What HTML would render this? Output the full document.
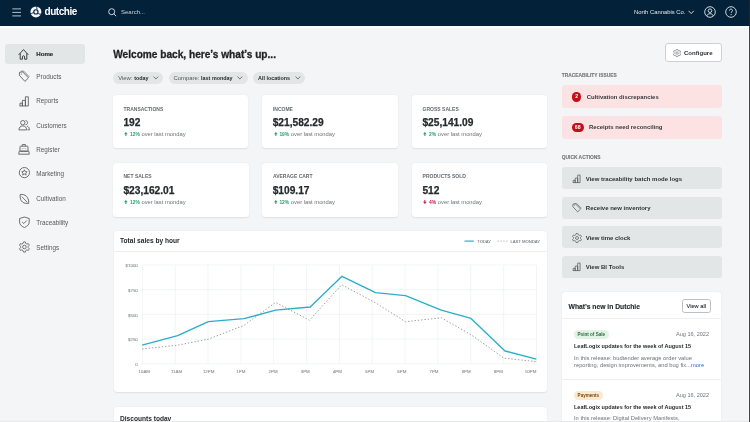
<!DOCTYPE html>
<html><head><meta charset="utf-8">
<style>
*{box-sizing:border-box;margin:0;padding:0;white-space:nowrap}
html,body{width:750px;height:422px;overflow:hidden;background:#f4f5f6;font-family:"Liberation Sans",sans-serif;color:#1d2124;position:relative}
.a{position:absolute;white-space:nowrap}
#top{position:absolute;left:0;top:0;width:750px;height:26px;background:#04213a}
.nav{position:absolute;left:36.3px;font-size:6.3px;color:#555a5e;line-height:8px}
.card{position:absolute;background:#fff;border-radius:3.5px;box-shadow:0 0.5px 1.5px rgba(0,0,0,0.09)}
.lbl{position:absolute;font-size:5px;font-weight:bold;color:#676c70;line-height:6px}
.val{position:absolute;font-size:10.2px;font-weight:bold;color:#262a2d;line-height:12px;-webkit-text-stroke:0.25px #262a2d}
.sub{position:absolute;font-size:5.8px;color:#6d7276;line-height:7px}
.sub b{font-size:4.9px;color:#26a070}
.sub b.r{color:#c8174a}
.sub i{position:absolute;top:0.5px;left:0.8px;width:4px;height:4px;line-height:0}
.sub span{position:absolute;left:6.5px;top:0.15px}
.pill{position:absolute;top:71.7px;height:12.5px;border-radius:6.5px;background:#e3e6e7;font-size:5.9px;color:#52575b;line-height:12.5px}
.pill b{color:#262a2d;font-size:5.4px}
.pill svg{position:absolute;top:4.6px}
.sec{position:absolute;left:561.7px;font-size:4.9px;font-weight:bold;color:#72777b;line-height:6px;-webkit-text-stroke:0.12px #72777b}
.pink{position:absolute;left:561.5px;width:160px;height:22.8px;background:#fde2e4;border-radius:3px}
.pink span.t{position:absolute;top:7.6px;font-size:5.95px;font-weight:bold;color:#35393d;line-height:8px}
.badge{position:absolute;top:6.9px;height:9.6px;background:#c10e18;border-radius:5px;color:#fff;font-size:5.2px;font-weight:bold;text-align:center;line-height:9.6px;padding-top:0.4px}
.qa{position:absolute;left:561.5px;width:160px;height:22px;background:#e3e6e7;border-radius:3px}
.qa span{position:absolute;left:24.3px;top:7.4px;font-size:6px;font-weight:bold;color:#2f3337;line-height:8px}
.qa svg{position:absolute;left:10px;top:6.5px}
.ax{position:absolute;font-size:4.4px;color:#8c9094;line-height:5px;-webkit-text-stroke:0.1px #8c9094}
.ic{position:absolute;left:17px;overflow:visible}
</style></head><body><div id="w" style="position:absolute;left:0;top:0;width:750px;height:422px;will-change:transform">
<div id="top">
  <svg class="a" style="left:12px;top:8px" width="10" height="9" viewBox="0 0 10 9"><path d="M0.3 0.9h8.7M0.3 4.4h8.7M0.3 7.9h8.7" stroke="#c9d1d8" stroke-width="0.9"/></svg>
  <svg class="a" style="left:30.3px;top:5.9px" width="12" height="12" viewBox="0 0 12 12"><circle cx="5.9" cy="5.9" r="5.5" fill="#f4f6f8"/><circle cx="5.9" cy="5.9" r="2.7" fill="#04213a"/><circle cx="5.9" cy="5.9" r="1.55" fill="#f4f6f8"/><path d="M5.8 0Q7.3 1.6 7 3.5M0 7.4Q1.9 7.7 3.3 6.6M11.9 7.9Q10 8.9 8.2 7.5" fill="none" stroke="#04213a" stroke-width="0.9"/></svg>
  <div class="a" style="left:44.5px;top:5.5px;font-size:10px;font-weight:bold;color:#fff;line-height:12px;letter-spacing:-0.45px">dutchie</div>
  <svg class="a" style="left:108px;top:7.8px" width="9" height="9" viewBox="0 0 9 9"><circle cx="3.7" cy="3.7" r="3" fill="none" stroke="#dfe5ea" stroke-width="0.9"/><path d="M5.9 5.9L8.2 8.2" stroke="#dfe5ea" stroke-width="0.9"/></svg>
  <div class="a" style="left:121px;top:7.6px;font-size:6px;color:#c9d1d8;line-height:8px">Search...</div>
  <div class="a" style="left:634px;top:8.2px;font-size:5.85px;color:#dfe5ea;line-height:8px">North Cannabis Co.</div>
  <svg class="a" style="left:688px;top:9.9px" width="7" height="5" viewBox="0 0 7 5"><path d="M0.6 0.8L3.2 3.6L5.8 0.8" fill="none" stroke="#dfe5ea" stroke-width="0.9"/></svg>
  <svg class="a" style="left:703.6px;top:5.8px" width="12" height="12" viewBox="0 0 12 12"><circle cx="6" cy="6" r="5.3" fill="none" stroke="#dfe5ea" stroke-width="0.9"/><circle cx="6" cy="4.7" r="1.8" fill="none" stroke="#dfe5ea" stroke-width="0.9"/><path d="M2.7 9.9C3.4 8.3 4.6 7.7 6 7.7S8.6 8.3 9.3 9.9" fill="none" stroke="#dfe5ea" stroke-width="0.9"/></svg>
  <svg class="a" style="left:724.9px;top:5.8px" width="12" height="12" viewBox="0 0 12 12"><circle cx="6" cy="6" r="5.3" fill="none" stroke="#dfe5ea" stroke-width="0.9"/><path d="M4.5 4.6C4.5 3.7 5.1 3.1 6 3.1S7.5 3.7 7.5 4.5C7.5 5.5 6.1 5.7 6.1 6.9" fill="none" stroke="#dfe5ea" stroke-width="0.9"/><circle cx="6.1" cy="8.6" r="0.6" fill="#dfe5ea"/></svg>
</div>
<div class="a" style="left:0;top:26px;width:750px;height:1.9px;background:#fbfcfc"></div>
<div class="a" style="left:747.6px;top:26px;width:1.2px;height:396px;background:#fbfcfc"></div><div class="a" style="left:748.8px;top:0;width:1.2px;height:422px;background:rgba(38,40,43,0.88)"></div>


<!-- sidebar -->
<div class="a" style="left:5.3px;top:43.7px;width:79.4px;height:20.3px;background:#e3e6e7;border-radius:3px"></div>
<svg class="ic" style="top:47.5px" width="14" height="13" viewBox="0 0 14 13"><path d="M1.7 6.8L6.5 1.6L11.3 6.8M3.2 5.3V11.2H5.4V8.9C5.4 8.2 5.9 7.7 6.5 7.7S7.6 8.2 7.6 8.9V11.2H9.8V5.3" fill="none" stroke="#33373b" stroke-width="0.95" stroke-linejoin="round"/></svg>
<div class="nav" style="top:50.3px;font-weight:bold;color:#262a2d;font-size:6.1px;-webkit-text-stroke:0.15px #262a2d">Home</div>
<svg class="ic" style="top:70px" width="14" height="13" viewBox="0 0 14 13"><path d="M2.3 5.2L2.6 2.2L5.6 1.9L11.5 7.8L7.9 11.4Z" fill="none" stroke="#55595d" stroke-width="0.85" stroke-linejoin="round"/><path d="M4.2 1.2L6.6 1.1L12.4 6.9" fill="none" stroke="#55595d" stroke-width="0.7"/><circle cx="4.3" cy="4" r="0.55" fill="#55595d"/></svg>
<div class="nav" style="top:72.6px;font-size:6.4px">Products</div>
<svg class="ic" style="top:94.5px" width="14" height="13" viewBox="0 0 14 13"><path d="M3 11V8.2H5.4V11M5.4 11V5.4H8.4V11M8.4 11V1.8H11.3V11H2.6" fill="none" stroke="#55595d" stroke-width="0.85" stroke-linejoin="round"/></svg>
<div class="nav" style="top:97.1px">Reports</div>
<svg class="ic" style="top:119px" width="14" height="13" viewBox="0 0 14 13"><circle cx="5.8" cy="3.7" r="2.2" fill="none" stroke="#55595d" stroke-width="0.85"/><path d="M1.9 10.9C1.9 8.4 3.6 6.9 5.8 6.9S9.7 8.4 9.7 10.9Z" fill="none" stroke="#55595d" stroke-width="0.85" stroke-linejoin="round"/><path d="M8.5 1.6C9.7 1.5 10.6 2.5 10.6 3.7S9.7 5.9 8.5 5.8M10.1 7.1C11.5 7.6 12.4 8.9 12.4 10.9H10.6" fill="none" stroke="#55595d" stroke-width="0.85"/></svg>
<div class="nav" style="top:121.5px">Customers</div>
<svg class="ic" style="top:143px" width="14" height="13" viewBox="0 0 14 13"><path d="M5.3 3.2V1.5H8.4V3.2" fill="none" stroke="#55595d" stroke-width="0.8"/><rect x="3" y="3.2" width="8" height="5" rx="0.6" fill="none" stroke="#55595d" stroke-width="0.85"/><path d="M2.2 8.2H11.8L12.3 11.2H1.7Z" fill="none" stroke="#55595d" stroke-width="0.85" stroke-linejoin="round"/><path d="M4.8 5.6h0.6M6.7 5.6h0.6M8.6 5.6h0.6" stroke="#55595d" stroke-width="0.8"/></svg>
<div class="nav" style="top:145.7px">Register</div>
<svg class="ic" style="top:167.3px" width="14" height="13" viewBox="0 0 14 13"><circle cx="7.4" cy="5.6" r="5.1" fill="none" stroke="#55595d" stroke-width="0.85"/><path d="M7.4 2.8L8.2 4.6L10.1 4.8L8.7 6.1L9.1 8.1L7.4 7.1L5.7 8.1L6.1 6.1L4.7 4.8L6.6 4.6Z" fill="none" stroke="#55595d" stroke-width="0.8" stroke-linejoin="round"/></svg>
<div class="nav" style="top:170px">Marketing</div>
<svg class="ic" style="top:192.5px" width="14" height="13" viewBox="0 0 14 13"><path d="M3.2 1.5C7.8 0.8 11.9 3.6 11.8 10.3C7.4 11 2.3 9.2 3.2 1.5Z" fill="none" stroke="#55595d" stroke-width="0.85" stroke-linejoin="round"/><path d="M4.8 3.6L10.3 9.4" stroke="#55595d" stroke-width="0.8"/></svg>
<div class="nav" style="top:194.8px">Cultivation</div>
<svg class="ic" style="top:216px" width="14" height="13" viewBox="0 0 14 13"><path d="M7.4 1L12.2 2.5V6.2C12.2 8.6 10.2 10.4 7.4 11.5C4.6 10.4 2.6 8.6 2.6 6.2V2.5Z" fill="none" stroke="#55595d" stroke-width="0.85" stroke-linejoin="round"/><path d="M5.2 6L6.8 7.5L9.7 4.6" fill="none" stroke="#55595d" stroke-width="0.85"/></svg>
<div class="nav" style="top:218.6px">Traceability</div>
<svg class="ic" style="top:240.5px" width="14" height="13" viewBox="0 0 14 13"><path d="M6.5 0.9H8.3L8.7 2.4L9.9 3.1L11.4 2.6L12.3 4.2L11.2 5.3V6.7L12.3 7.8L11.4 9.4L9.9 8.9L8.7 9.6L8.3 11.1H6.5L6.1 9.6L4.9 8.9L3.4 9.4L2.5 7.8L3.6 6.7V5.3L2.5 4.2L3.4 2.6L4.9 3.1L6.1 2.4Z" fill="none" stroke="#55595d" stroke-width="0.8" stroke-linejoin="round"/><circle cx="7.4" cy="6" r="1.8" fill="none" stroke="#55595d" stroke-width="0.8"/></svg>
<div class="nav" style="top:243.5px">Settings</div>

<!-- heading -->
<div class="a" style="left:113.2px;top:48.9px;font-size:10.15px;font-weight:bold;color:#1f2326;line-height:12px;-webkit-text-stroke:0.3px #1f2326">Welcome back, here’s what’s up...</div>
<div class="pill" style="left:113.2px;width:49.8px"><span class="a" style="left:5px">View: <b>today</b></span><svg style="left:40px" width="6" height="4" viewBox="0 0 6 4"><path d="M0.5 0.6L2.9 2.9L5.3 0.6" fill="none" stroke="#55595d" stroke-width="0.8"/></svg></div>
<div class="pill" style="left:168.6px;width:79.2px"><span class="a" style="left:5px">Compare: <b>last monday</b></span><svg style="left:68.5px" width="6" height="4" viewBox="0 0 6 4"><path d="M0.5 0.6L2.9 2.9L5.3 0.6" fill="none" stroke="#55595d" stroke-width="0.8"/></svg></div>
<div class="pill" style="left:253px;width:52px"><span class="a" style="left:5px"><b>All locations</b></span><svg style="left:41.5px" width="6" height="4" viewBox="0 0 6 4"><path d="M0.5 0.6L2.9 2.9L5.3 0.6" fill="none" stroke="#55595d" stroke-width="0.8"/></svg></div>

<!-- stat cards -->
<div class="card" style="left:113px;top:94.8px;width:135.4px;height:53.6px"></div>
<div class="card" style="left:262.4px;top:94.8px;width:135.8px;height:53.6px"></div>
<div class="card" style="left:412.1px;top:94.8px;width:135.3px;height:53.6px"></div>
<div class="card" style="left:113px;top:163px;width:135.5px;height:53.5px"></div>
<div class="card" style="left:262.4px;top:163px;width:135.8px;height:53.5px"></div>
<div class="card" style="left:412.1px;top:163px;width:135.3px;height:53.5px"></div>

<div class="lbl" style="left:123.5px;top:105.6px">TRANSACTIONS</div>
<div class="val" style="left:123.4px;top:117.3px">192</div>
<div class="sub" style="left:123.5px;top:131.2px"><i><svg width="4" height="4" viewBox="0 0 4 4"><path d="M0 2.2L1.85 0L3.7 2.2H2.35V4H1.35V2.2Z" fill="#26a070"/></svg></i><span><b>12%</b> over last monday</span></div>
<div class="lbl" style="left:272.9px;top:105.6px">INCOME</div>
<div class="val" style="left:272.7px;top:117.3px">$21,582.29</div>
<div class="sub" style="left:272.9px;top:131.2px"><i><svg width="4" height="4" viewBox="0 0 4 4"><path d="M0 2.2L1.85 0L3.7 2.2H2.35V4H1.35V2.2Z" fill="#26a070"/></svg></i><span><b>19%</b> over last monday</span></div>
<div class="lbl" style="left:422.6px;top:105.6px">GROSS SALES</div>
<div class="val" style="left:422.4px;top:117.3px">$25,141.09</div>
<div class="sub" style="left:422.6px;top:131.2px"><i><svg width="4" height="4" viewBox="0 0 4 4"><path d="M0 2.2L1.85 0L3.7 2.2H2.35V4H1.35V2.2Z" fill="#26a070"/></svg></i><span><b>2%</b> over last monday</span></div>

<div class="lbl" style="left:123.5px;top:173.4px">NET SALES</div>
<div class="val" style="left:123.4px;top:185.1px">$23,162.01</div>
<div class="sub" style="left:123.5px;top:199px"><i><svg width="4" height="4" viewBox="0 0 4 4"><path d="M0 2.2L1.85 0L3.7 2.2H2.35V4H1.35V2.2Z" fill="#26a070"/></svg></i><span><b>12%</b> over last monday</span></div>
<div class="lbl" style="left:272.9px;top:173.4px">AVERAGE CART</div>
<div class="val" style="left:272.7px;top:185.1px">$109.17</div>
<div class="sub" style="left:272.9px;top:199px"><i><svg width="4" height="4" viewBox="0 0 4 4"><path d="M0 2.2L1.85 0L3.7 2.2H2.35V4H1.35V2.2Z" fill="#26a070"/></svg></i><span><b>12%</b> over last monday</span></div>
<div class="lbl" style="left:422.6px;top:173.4px">PRODUCTS SOLD</div>
<div class="val" style="left:422.4px;top:185.1px">512</div>
<div class="sub" style="left:422.6px;top:199px"><i><svg width="4" height="4" viewBox="0 0 4 4"><path d="M0 1.8L1.85 4L3.7 1.8H2.35V0H1.35V1.8Z" fill="#c8174a"/></svg></i><span><b class="r">4%</b> over last monday</span></div>

<!-- chart card -->
<div class="card" style="left:114px;top:230.8px;width:432.8px;height:161.5px"></div>
<div class="a" style="left:114px;top:251.3px;width:432.8px;height:0.8px;background:#eef0f1"></div>
<div class="a" style="left:120px;top:237.3px;font-size:6.6px;font-weight:bold;color:#262a2d;line-height:8px">Total sales by hour</div>
<svg class="a" style="left:0;top:0" width="750" height="422" viewBox="0 0 750 422">
  <path d="M464.5 241.1H473.8" stroke="#2aaec8" stroke-width="1.2"/>
  <path d="M497.5 241.1H507.6" stroke="#9a9ea1" stroke-width="0.8" stroke-dasharray="1.3 1.6"/>
  <g stroke="#eef0f1" stroke-width="0.7">
    <path d="M142.3 265H536.5M142.3 289.7H536.5M142.3 314.4H536.5M142.3 339.1H536.5M142.3 363.8H536.5"/>
    <path d="M142.3 265V363.8M175.2 265V363.8M208.0 265V363.8M240.9 265V363.8M273.7 265V363.8M306.6 265V363.8M339.4 265V363.8M372.2 265V363.8M405.1 265V363.8M438.0 265V363.8M470.8 265V363.8M503.7 265V363.8M536.5 265V363.8"/>
  </g>
  <polyline points="142.1,348.9 177.7,345.2 208.3,339.1 244,325.4 275.6,302.4 309.5,320.2 341.7,284.7 375.5,302.8 405.5,321.7 441.3,317.8 471,334.7 503.9,358.1 536.3,361.7" fill="none" stroke="#9a9ea1" stroke-width="1" stroke-dasharray="1.4 1.9"/>
  <polyline points="142.1,345.1 177.7,335.7 208.3,321.6 244,318.7 275.6,310.2 310.2,307 342,276.3 375.5,292.7 405.5,295.6 441.3,310.1 471,318.4 505,351 536.3,359.2" fill="none" stroke="#2aaec8" stroke-width="1.35" stroke-linejoin="round"/>
</svg>
<div class="ax" style="left:477.2px;top:239px;font-size:4.15px;color:#6f7478">TODAY</div>
<div class="ax" style="left:510.4px;top:239px;font-size:4.2px;color:#6f7478">LAST MONDAY</div>
<div class="ax" style="left:118px;top:263.2px;width:19.8px;text-align:right">$1000</div>
<div class="ax" style="left:118px;top:287.9px;width:19.8px;text-align:right">$750</div>
<div class="ax" style="left:118px;top:312.6px;width:19.8px;text-align:right">$500</div>
<div class="ax" style="left:118px;top:337.3px;width:19.8px;text-align:right">$250</div>
<div class="ax" style="left:118px;top:362px;width:19.8px;text-align:right">0</div>
<div class="a" style="left:0;top:369.3px;width:750px;height:6px">
  <div class="ax" style="left:134.30px;width:20px;text-align:center">10AM</div>
  <div class="ax" style="left:166.49px;width:20px;text-align:center">11AM</div>
  <div class="ax" style="left:198.68px;width:20px;text-align:center">12PM</div>
  <div class="ax" style="left:230.87px;width:20px;text-align:center">1PM</div>
  <div class="ax" style="left:263.06px;width:20px;text-align:center">2PM</div>
  <div class="ax" style="left:295.25px;width:20px;text-align:center">3PM</div>
  <div class="ax" style="left:327.44px;width:20px;text-align:center">4PM</div>
  <div class="ax" style="left:359.63px;width:20px;text-align:center">5PM</div>
  <div class="ax" style="left:391.82px;width:20px;text-align:center">6PM</div>
  <div class="ax" style="left:424.01px;width:20px;text-align:center">7PM</div>
  <div class="ax" style="left:456.20px;width:20px;text-align:center">8PM</div>
  <div class="ax" style="left:488.39px;width:20px;text-align:center">9PM</div>
  <div class="ax" style="left:520.58px;width:20px;text-align:center">10PM</div>
</div>

<div class="card" style="left:114px;top:407px;width:432.8px;height:30px"></div>
<div class="a" style="left:120px;top:415.4px;font-size:6.6px;font-weight:bold;color:#262a2d;line-height:8px">Discounts today</div>


<!-- right column -->
<div class="a" style="left:664.7px;top:43.4px;width:57px;height:19.1px;background:#fff;border:0.8px solid #cdd1d4;border-radius:3px"></div>
<svg class="a" style="left:672.7px;top:49.2px" width="8.2" height="8.2" viewBox="0 0 10 10"><path d="M4.1 0.5H5.9L6.2 1.8L7.3 2.4L8.6 2L9.5 3.5L8.5 4.4V5.6L9.5 6.5L8.6 8L7.3 7.6L6.2 8.2L5.9 9.5H4.1L3.8 8.2L2.7 7.6L1.4 8L0.5 6.5L1.5 5.6V4.4L0.5 3.5L1.4 2L2.7 2.4L3.8 1.8Z" fill="none" stroke="#55595d" stroke-width="0.7" stroke-linejoin="round"/><circle cx="5" cy="5" r="1.5" fill="none" stroke="#55595d" stroke-width="0.7"/></svg>
<div class="a" style="left:684px;top:49.3px;font-size:6.05px;font-weight:bold;color:#2f3337;line-height:8px">Configure</div>

<div class="sec" style="top:72.6px">TRACEABILITY ISSUES</div>
<div class="pink" style="top:85.1px"><div class="badge" style="left:10.4px;width:9.6px">2</div><span class="t" style="left:25.3px">Cultivation discrepancies</span></div>
<div class="pink" style="top:115.8px"><div class="badge" style="left:10.4px;width:11.7px">68</div><span class="t" style="left:27.4px">Receipts need reconciling</span></div>

<div class="sec" style="top:154.5px">QUICK ACTIONS</div>
<div class="qa" style="top:167.2px"><svg width="10" height="10" viewBox="0 0 10 10"><path d="M1.2 8.6V6.3H3.2V8.6M3.2 8.6V4.1H5.7V8.6M5.7 8.6V1.1H8.1V8.6H0.8" fill="none" stroke="#55595d" stroke-width="0.75" stroke-linejoin="round"/></svg><span>View traceability batch mode logs</span></div>
<div class="qa" style="top:196.7px"><svg width="10" height="10" viewBox="0 0 10 10"><path d="M0.8 3.6L1 1.1L3.5 0.9L8.6 6L5.7 8.9Z" fill="none" stroke="#55595d" stroke-width="0.75" stroke-linejoin="round"/><path d="M2.4 0.4L4.4 0.3L9.4 5.3" fill="none" stroke="#55595d" stroke-width="0.6"/><circle cx="2.5" cy="2.6" r="0.45" fill="#55595d"/></svg><span>Receive new inventory</span></div>
<div class="qa" style="top:226.3px"><svg width="10" height="10" viewBox="0 0 10 10"><path d="M4.1 0.5H5.9L6.2 1.8L7.3 2.4L8.6 2L9.5 3.5L8.5 4.4V5.6L9.5 6.5L8.6 8L7.3 7.6L6.2 8.2L5.9 9.5H4.1L3.8 8.2L2.7 7.6L1.4 8L0.5 6.5L1.5 5.6V4.4L0.5 3.5L1.4 2L2.7 2.4L3.8 1.8Z" fill="none" stroke="#55595d" stroke-width="0.7" stroke-linejoin="round"/><circle cx="5" cy="5" r="1.5" fill="none" stroke="#55595d" stroke-width="0.7"/></svg><span>View time clock</span></div>
<div class="qa" style="top:255.8px"><svg width="10" height="10" viewBox="0 0 10 10"><path d="M1.2 8.6V6.3H3.2V8.6M3.2 8.6V4.1H5.7V8.6M5.7 8.6V1.1H8.1V8.6H0.8" fill="none" stroke="#55595d" stroke-width="0.75" stroke-linejoin="round"/></svg><span>View BI Tools</span></div>

<div class="card" style="left:561.5px;top:292.1px;width:159.8px;height:140px"></div>
<div class="a" style="left:561.5px;top:318.2px;width:159.8px;height:0.8px;background:#eef0f1"></div>
<div class="a" style="left:568.6px;top:303.3px;font-size:6.75px;font-weight:bold;color:#262a2d;line-height:8px;-webkit-text-stroke:0.12px #262a2d">What’s new in Dutchie</div>
<div class="a" style="left:681.6px;top:299.3px;width:29.2px;height:13.6px;background:#fff;border:0.8px solid #bcc0c3;border-radius:2.5px;font-size:5.7px;font-weight:normal;color:#2a2e32;text-align:center;line-height:12px;-webkit-text-stroke:0.1px #2a2e32">View all</div>

<div class="a" style="left:574px;top:330px;width:34.5px;height:8.6px;border-radius:4.3px;background:#e2f2e5;color:#2e6b45;font-size:4.55px;font-weight:bold;text-align:center;line-height:8.6px;padding-top:0.8px">Point of Sale</div>
<div class="a" style="left:676px;top:330.7px;font-size:5.55px;color:#70757a;line-height:7px">Aug 16, 2022</div>
<div class="a" style="left:574px;top:342.8px;font-size:5.52px;font-weight:bold;color:#262a2d;line-height:7px">LeafLogix updates for the week of August 15</div>
<div class="a" style="left:574px;top:354.9px;font-size:5.77px;color:#6d7276;line-height:7px">In this release: budtender average order value</div>
<div class="a" style="left:574px;top:361.9px;font-size:5.77px;color:#6d7276;line-height:7px">reporting, design improvements, and bug fix...<span style="color:#2a6fd0">more</span></div>
<div class="a" style="left:561.5px;top:378.8px;width:159.8px;height:0.8px;background:#eef0f1"></div>
<div class="a" style="left:574px;top:391.2px;width:28.7px;height:8.6px;border-radius:4.3px;background:#fde9cf;color:#7a4a12;font-size:4.55px;font-weight:bold;text-align:center;line-height:8.6px;padding-top:0.8px">Payments</div>
<div class="a" style="left:676px;top:391.7px;font-size:5.55px;color:#70757a;line-height:7px">Aug 16, 2022</div>
<div class="a" style="left:574px;top:404.3px;font-size:5.52px;font-weight:bold;color:#262a2d;line-height:7px">LeafLogix updates for the week of August 15</div>
<div class="a" style="left:574px;top:414.6px;font-size:5.77px;color:#6d7276;line-height:7px">In this release: Digital Delivery Manifests,</div>

<div class="a" style="left:0;top:420.5px;width:748.8px;height:1.5px;background:#e6e8ea"></div></div></body></html>
